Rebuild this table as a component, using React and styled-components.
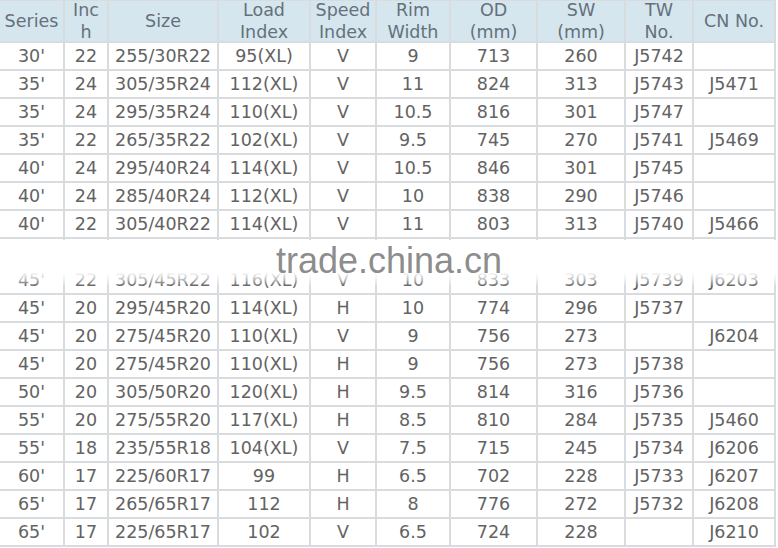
import React from "react";
import styled, { createGlobalStyle } from "styled-components";

const GlobalStyle = createGlobalStyle`
  html, body {
    margin: 0;
    padding: 0;
    background: #ffffff;
  }
`;

const headers = [
  ["Series"],
  ["Inc", "h"],
  ["Size"],
  ["Load", "Index"],
  ["Speed", "Index"],
  ["Rim", "Width"],
  ["OD", "(mm)"],
  ["SW", "(mm)"],
  ["TW", "No."],
  ["CN No."],
];

// the row under the watermark band is unreadable in the source, left blank
const rows = [
  ["30'", "22", "255/30R22", "95(XL)", "V", "9", "713", "260", "J5742", ""],
  ["35'", "24", "305/35R24", "112(XL)", "V", "11", "824", "313", "J5743", "J5471"],
  ["35'", "24", "295/35R24", "110(XL)", "V", "10.5", "816", "301", "J5747", ""],
  ["35'", "22", "265/35R22", "102(XL)", "V", "9.5", "745", "270", "J5741", "J5469"],
  ["40'", "24", "295/40R24", "114(XL)", "V", "10.5", "846", "301", "J5745", ""],
  ["40'", "24", "285/40R24", "112(XL)", "V", "10", "838", "290", "J5746", ""],
  ["40'", "22", "305/40R22", "114(XL)", "V", "11", "803", "313", "J5740", "J5466"],
  ["", "", "", "", "", "", "", "", "", ""],
  ["45'", "22", "305/45R22", "116(XL)", "V", "10", "833", "303", "J5739", "J6203"],
  ["45'", "20", "295/45R20", "114(XL)", "H", "10", "774", "296", "J5737", ""],
  ["45'", "20", "275/45R20", "110(XL)", "V", "9", "756", "273", "", "J6204"],
  ["45'", "20", "275/45R20", "110(XL)", "H", "9", "756", "273", "J5738", ""],
  ["50'", "20", "305/50R20", "120(XL)", "H", "9.5", "814", "316", "J5736", ""],
  ["55'", "20", "275/55R20", "117(XL)", "H", "8.5", "810", "284", "J5735", "J5460"],
  ["55'", "18", "235/55R18", "104(XL)", "V", "7.5", "715", "245", "J5734", "J6206"],
  ["60'", "17", "225/60R17", "99", "H", "6.5", "702", "228", "J5733", "J6207"],
  ["65'", "17", "265/65R17", "112", "H", "8", "776", "272", "J5732", "J6208"],
  ["65'", "17", "225/65R17", "102", "V", "6.5", "724", "228", "", "J6210"],
];

const App = () => {
  return (
    <>
      <GlobalStyle />
      <Page>
        <Sheet>
          {headers.map((lines, i) => (
            <HeadCell key={"h" + i}>
              {lines.map((l) => (
                <span key={l}>{l}</span>
              ))}
            </HeadCell>
          ))}
          {rows.map((row, r) =>
            row.map((val, c) => (
              <Cell key={r + "-" + c}>{val}</Cell>
            ))
          )}
        </Sheet>
        <Watermark>
          <MarkText>trade.china.cn</MarkText>
        </Watermark>
      </Page>
    </>
  );
};

export default App;

const Page = styled.div`
  position: relative;
  width: 778px;
  height: 548px;
  overflow: hidden;
  background: #ffffff;
`;

const Sheet = styled.div`
  display: grid;
  grid-template-columns: 63px 42px 108px 90px 64px 72px 85px 86px 66px 80px;
  grid-template-rows: 40px repeat(18, 26px);
  gap: 2px;
  width: 774px;
  padding: 1px 2px 2px 0;
  background: #d9dcde;
  font-family: "DejaVu Sans", Verdana, sans-serif;
  font-size: 17.5px;
  color: #636363;
`;

const HeadCell = styled.div`
  display: flex;
  flex-direction: column;
  align-items: center;
  justify-content: center;
  background: #d5e6ef;
  color: #64717a;
  line-height: 22px;
  white-space: nowrap;
`;

const Cell = styled.div`
  display: flex;
  align-items: center;
  justify-content: center;
  background: #ffffff;
  white-space: nowrap;
  line-height: 26px;
`;

const Watermark = styled.div`
  position: absolute;
  left: 0;
  top: 240px;
  width: 778px;
  height: 46px;
  display: flex;
  justify-content: center;
  align-items: flex-start;
  background: linear-gradient(
    to bottom,
    #ffffff 0%,
    #ffffff 70%,
    rgba(255, 255, 255, 0.5) 88%,
    rgba(255, 255, 255, 0) 100%
  );
`;

const MarkText = styled.div`
  margin-top: 3px;
  font-family: "Liberation Sans", Arial, sans-serif;
  font-size: 36px;
  line-height: 36px;
  color: rgba(125, 125, 125, 0.9);
`;
